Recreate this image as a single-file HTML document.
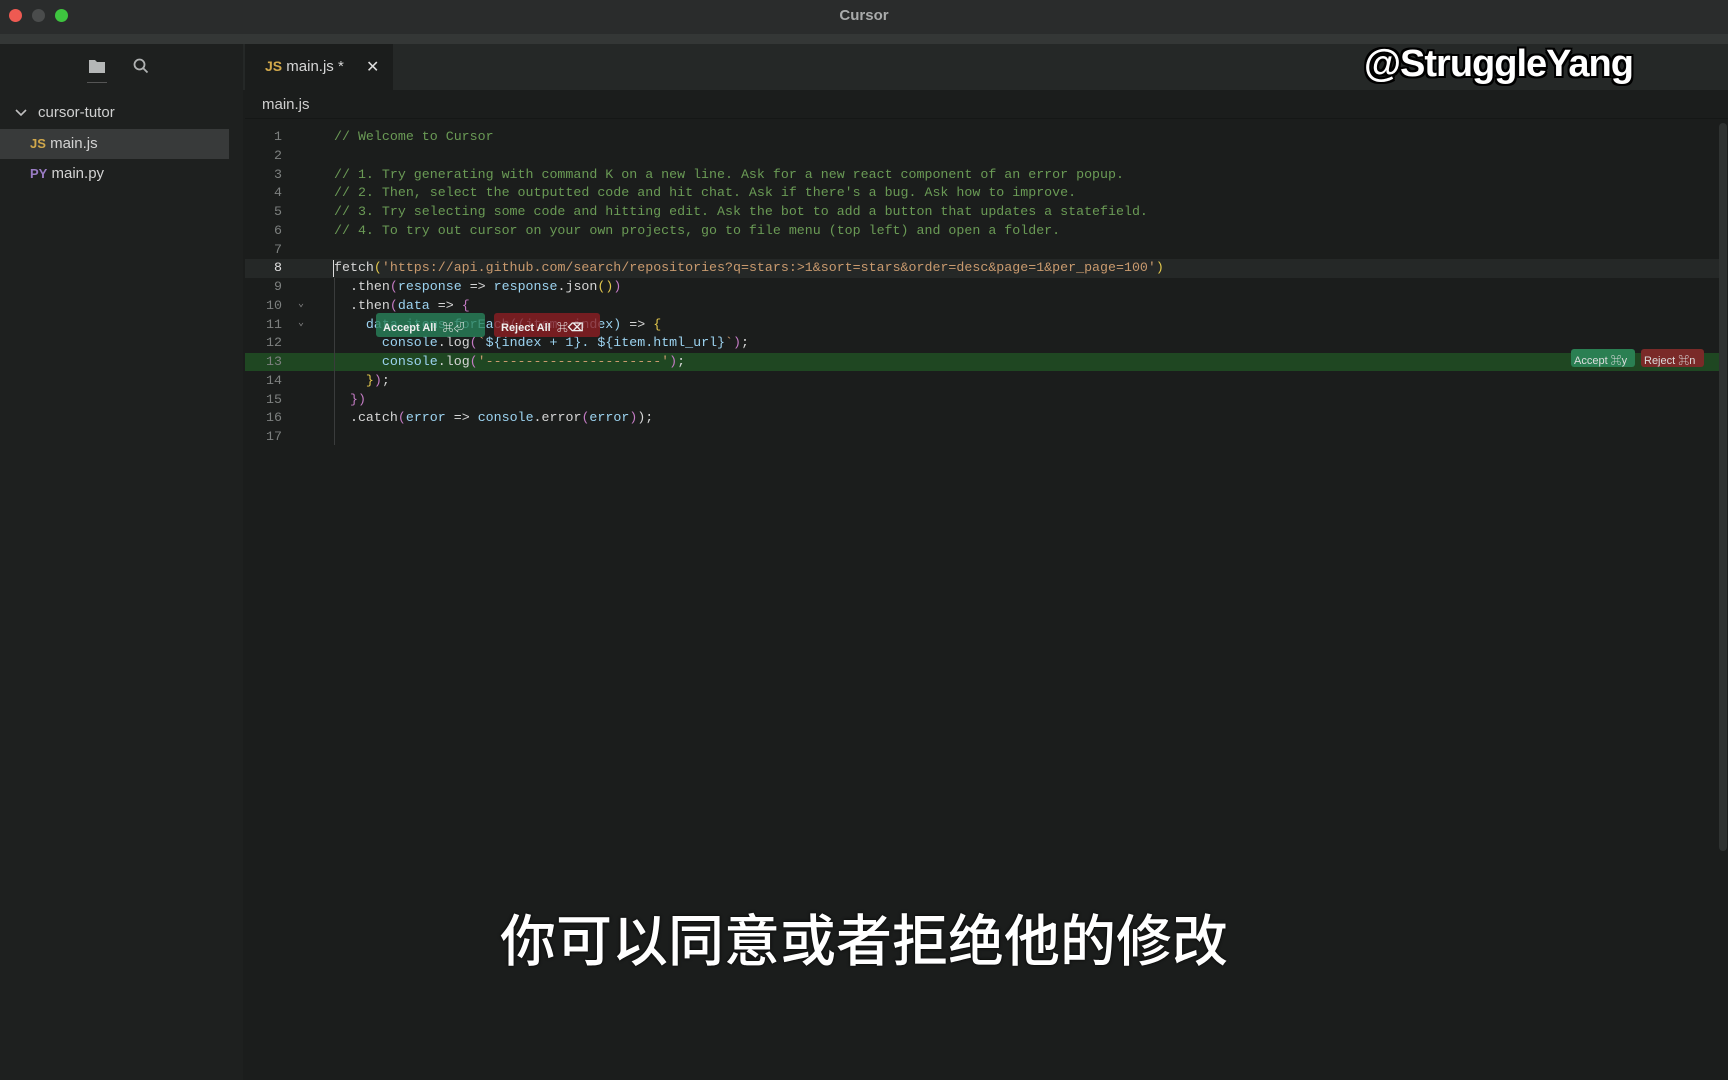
<!DOCTYPE html>
<html><head><meta charset="utf-8"><style>
*{margin:0;padding:0;box-sizing:border-box}
body{width:1728px;height:1080px;background:#1b1d1c;position:relative;overflow:hidden;font-family:"Liberation Sans","Noto Sans CJK SC",sans-serif;color:#ccc}
.abs{position:absolute}
#title{left:0;top:0;width:1728px;height:34px;background:#2a2c2c}
#strip{left:0;top:34px;width:1728px;height:10px;background:#343736}
#side{left:0;top:44px;width:243px;height:1036px;background:#1e201f}
#tabbar{left:243px;top:44px;width:1485px;height:46px;background:#252827}
#tab{left:245px;top:44px;width:148px;height:46px;background:#1b1d1c}
.code{font-family:"Liberation Mono",monospace;font-size:13.3px;white-space:pre;line-height:18.75px}
.ln{left:245px;width:37px;text-align:right;color:#7d807f}
.c{color:#6a9a55}.s{color:#c99a6e}.v{color:#9cd3f0}.w{color:#d6d6d6}.y{color:#e3c84d}.p{color:#c47bc4}.f{color:#cfcfa0}
</style></head><body>
<div class="abs" id="title"></div>
<div class="abs" style="left:9px;top:9px;width:13px;height:13px;border-radius:50%;background:#ee5a52"></div>
<div class="abs" style="left:32px;top:9px;width:13px;height:13px;border-radius:50%;background:#4a4c4c"></div>
<div class="abs" style="left:55px;top:9px;width:13px;height:13px;border-radius:50%;background:#3ec43f"></div>
<div class="abs" style="left:0;top:7px;width:1728px;text-align:center;font-size:15px;font-weight:bold;color:#a9abab">Cursor</div>
<div class="abs" id="strip"></div>
<div class="abs" id="side"></div>
<svg class="abs" style="left:88px;top:58px" width="18" height="16"><path d="M1 2h6l2 2h8v11H1z" fill="#b5b7b7"/></svg>
<div class="abs" style="left:87px;top:82px;width:20px;height:1px;background:#555"></div>
<svg class="abs" style="left:133px;top:58px" width="16" height="16"><circle cx="6.5" cy="6.5" r="5" stroke="#b0b2b2" stroke-width="1.8" fill="none"/><path d="M10 10l4.5 4.5" stroke="#b0b2b2" stroke-width="1.8"/></svg>
<svg class="abs" style="left:14px;top:107px" width="14" height="12"><path d="M2 3l5 5 5-5" stroke="#c0c0c0" stroke-width="1.6" fill="none"/></svg>
<div class="abs" style="left:38px;top:104px;font-size:15px;color:#cfd0d0">cursor-tutor</div>
<div class="abs" style="left:0;top:129px;width:229px;height:30px;background:#383a3a"></div>
<div class="abs" style="left:30px;top:135px;font-size:15px;color:#d3d3d3"><b style="color:#d1a84b;font-size:13px">JS</b> main.js</div>
<div class="abs" style="left:30px;top:165px;font-size:15px;color:#d3d3d3"><b style="color:#9a7cc4;font-size:13px">PY</b> main.py</div>
<div class="abs" id="tabbar"></div>
<div class="abs" id="tab"></div>
<div class="abs" style="left:265px;top:58px;font-size:15px;color:#d6d6d6"><b style="color:#d1a84b;font-size:14px">JS</b> main.js *</div>
<div class="abs" style="left:366px;top:57px;font-size:16px;color:#ddd">✕</div>
<div class="abs" style="left:262px;top:96px;font-size:15px;color:#cfcfcf">main.js</div>
<div class="abs" style="left:245px;top:118px;width:1483px;height:1px;background:#151716"></div>
<div class="abs" style="left:245px;top:259px;width:1474px;height:19px;background:#252827"></div>
<div class="abs" style="left:245px;top:353px;width:1474px;height:18px;background:#1f4722"></div>
<div class="abs" style="left:334px;top:278px;width:1px;height:167px;background:#3a3c3c"></div>
<div class="abs" style="left:333px;top:260px;width:1px;height:17px;background:#ddd"></div>
<div class="abs" style="left:1719px;top:123px;width:8px;height:728px;background:#2f3231;border-radius:4px"></div>
<div class="abs code ln" style="top:128px">1
2
3
4
5
6
7
<span style="color:#e0e0e0">8</span>
9
10
11
12
13
14
15
16
17</div>
<div class="abs code" style="left:298px;top:296px;color:#888;font-size:10px;line-height:18.75px">⌄
⌄</div>
<div class="abs code" style="left:334px;top:128px"><span class="c">// Welcome to Cursor</span>

<span class="c">// 1. Try generating with command K on a new line. Ask for a new react component of an error popup.</span>
<span class="c">// 2. Then, select the outputted code and hit chat. Ask if there's a bug. Ask how to improve.</span>
<span class="c">// 3. Try selecting some code and hitting edit. Ask the bot to add a button that updates a statefield.</span>
<span class="c">// 4. To try out cursor on your own projects, go to file menu (top left) and open a folder.</span>

<span class="w">fetch</span><span class="y">(</span><span class="s">'https://api.github.com/search/repositories?q=stars:&gt;1&amp;sort=stars&amp;order=desc&amp;page=1&amp;per_page=100'</span><span class="y">)</span>
  <span class="w">.then</span><span class="p">(</span><span class="v">response</span> <span class="w">=&gt;</span> <span class="v">response</span><span class="w">.json</span><span class="y">()</span><span class="p">)</span>
  <span class="w">.then</span><span class="p">(</span><span class="v">data</span> <span class="w">=&gt;</span> <span class="p">{</span>
    <span class="v">data.items.forEach((item, index)</span> <span class="w">=&gt;</span> <span class="y">{</span>
      <span class="v">console</span><span class="w">.log</span><span class="p">(</span><span class="s">`</span><span class="v">${index + 1}. ${item.html_url}</span><span class="s">`</span><span class="p">)</span><span class="w">;</span>
      <span class="v">console</span><span class="w">.log</span><span class="p">(</span><span class="s">'----------------------'</span><span class="p">)</span><span class="w">;</span>
    <span class="y">}</span><span class="p">)</span><span class="w">;</span>
  <span class="p">})</span>
  <span class="w">.catch</span><span class="p">(</span><span class="v">error</span> <span class="w">=&gt;</span> <span class="v">console</span><span class="w">.error</span><span class="p">(</span><span class="v">error</span><span class="p">)</span><span class="w">);</span>
</div>
<div class="abs" style="left:376px;top:313px;width:109px;height:24px;background:rgba(40,130,90,0.8);border-radius:3px;font-size:11px;color:#eee;padding:6px 7px;font-weight:bold">Accept All &nbsp;⌘⏎</div>
<div class="abs" style="left:494px;top:313px;width:106px;height:24px;background:rgba(140,30,35,0.8);border-radius:3px;font-size:11px;color:#eee;padding:6px 7px;font-weight:bold">Reject All &nbsp;⌘⌫</div>
<div class="abs" style="left:1571px;top:349px;width:64px;height:18px;background:#2a7f52;border-radius:3px;font-size:11px;color:#ddd;padding:3px 3px">Accept ⌘y</div>
<div class="abs" style="left:1641px;top:349px;width:63px;height:18px;background:#7a2a28;border-radius:3px;font-size:11px;color:#ddd;padding:3px 3px">Reject ⌘n</div>
<div class="abs" style="left:1364px;top:43px;font-size:38px;font-weight:bold;color:#fff;letter-spacing:-1px;text-shadow:-2px -2px 0 #000,2px -2px 0 #000,-2px 2px 0 #000,2px 2px 0 #000,0 2px 0 #000,0 -2px 0 #000,2px 0 0 #000,-2px 0 0 #000">@StruggleYang</div>
<div class="abs" style="left:0;top:897px;width:1728px;text-align:center;font-family:'Noto Sans CJK SC',sans-serif;font-size:56px;font-weight:500;color:#fff;text-shadow:0 0 3px #000">你可以同意或者拒绝他的修改</div>
</body></html>
